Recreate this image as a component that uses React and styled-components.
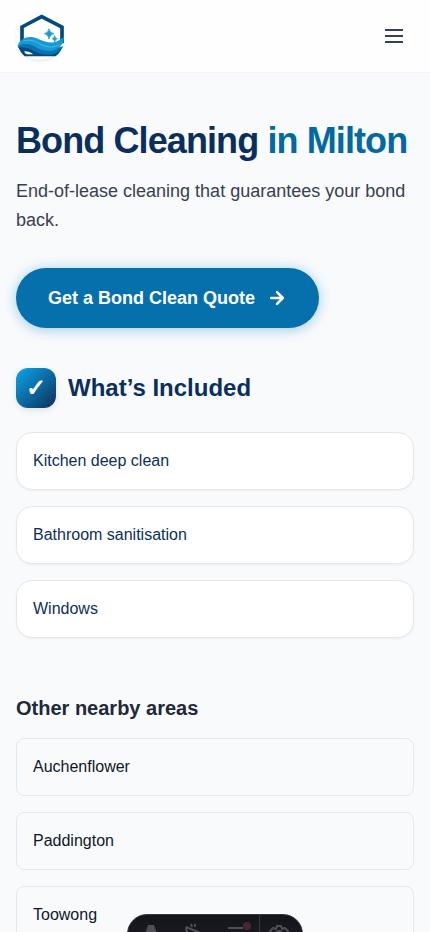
import React from "react";
import styled, { createGlobalStyle } from "styled-components";

const GlobalStyle = createGlobalStyle`
  *, *::before, *::after { box-sizing: border-box; }
  body {
    margin: 0;
    background: #f9fafc;
    color: #0f172a;
    font-family: "Liberation Sans", Arial, sans-serif;
    font-size: 16px;
    line-height: 24px;
  }
  h1, h2, p, ul { margin: 0; padding: 0; }
  ul { list-style: none; }
`;

const Header = styled.header`
  display: flex;
  align-items: center;
  justify-content: space-between;
  padding: 12px 16px;
  background: #fefefe;
  border-bottom: 1px solid #f1f5f9;
`;

const LogoLink = styled.a`
  display: block;
  width: 48px;
  height: 48px;
  border-radius: 50%;
  background: #fff;
  box-shadow: 0 1px 3px rgba(0, 0, 0, 0.1);
  svg { display: block; }
`;

const MenuButton = styled.button`
  display: flex;
  padding: 8px;
  border: 0;
  background: none;
  color: #334155;
`;

const Main = styled.main`
  padding: 48px 16px;
`;

const Title = styled.h1`
  color: #0b2f5c;
  font-size: 36px;
  line-height: 40px;
  font-weight: 700;
  letter-spacing: -0.025em;
  span { color: #0369a1; }
`;

const Lead = styled.p`
  margin-top: 16px;
  color: #374151;
  font-size: 18px;
  line-height: 29px;
`;

const QuoteLink = styled.a`
  display: inline-flex;
  align-items: center;
  gap: 12px;
  margin-top: 33px;
  padding: 16px 32px;
  border-radius: 30px;
  background: #0670ac;
  box-shadow: 0 0 14px rgba(14, 165, 233, 0.28), 0 4px 12px rgba(3, 105, 161, 0.14);
  color: #fff;
  font-size: 18px;
  line-height: 28px;
  font-weight: 700;
  text-decoration: none;
`;

const Section = styled.section`
  margin-top: ${(p) => p.$gap}px;
`;

const SectionHead = styled.div`
  display: flex;
  align-items: center;
  gap: 12px;
`;

const Tick = styled.span`
  display: flex;
  align-items: center;
  justify-content: center;
  width: 40px;
  height: 40px;
  border-radius: 12px;
  background: linear-gradient(135deg, #0ea5e9, #0b2f5c);
  box-shadow: 0 2px 6px rgba(0, 0, 0, 0.1);
  color: #fff;
  font-size: 24px;
  font-weight: 700;
`;

const Heading = styled.h2`
  color: ${(p) => (p.$large ? "#0b2f5c" : "#1f2937")};
  font-size: ${(p) => (p.$large ? 24 : 20)}px;
  line-height: ${(p) => (p.$large ? 32 : 28)}px;
  font-weight: 700;
`;

const List = styled.ul`
  display: grid;
  gap: 16px;
  margin-top: ${(p) => p.$gap}px;
`;

const Included = styled.li`
  padding: 16px;
  border: 1px solid #e5e7eb;
  border-radius: 16px;
  background: #fff;
  box-shadow: 0 1px 2px rgba(0, 0, 0, 0.05);
  color: #0b2f5c;
`;

const AreaLink = styled.a`
  display: block;
  padding: 16px;
  border: 1px solid #e2e8f0;
  border-radius: 8px;
  color: #0f172a;
  text-decoration: none;
`;

const Toolbar = styled.div`
  position: fixed;
  left: 50%;
  bottom: -22px;
  transform: translateX(-50%);
  display: flex;
  gap: 1px;
  height: 40px;
  padding-left: 2px;
  overflow: hidden;
  border: 1px solid #343841;
  border-radius: 20px;
  background: linear-gradient(180deg, #13151a, #1c1e24);
`;

const Tool = styled.button`
  display: flex;
  align-items: center;
  justify-content: center;
  width: ${(p) => (p.$divided ? 43 : 42)}px;
  padding: 0 ${(p) => (p.$divided ? 4 : 0)}px 0 0;
  border: 0;
  border-left: ${(p) => (p.$divided ? "1px solid #343841" : "0")};
  background: none;
  color: #4e5055;
`;

function Logo() {
  return (
    <svg width="48" height="48" viewBox="48 36 144 144" aria-hidden="true">
      <path d="M66 124V81L125 50L186 81V130" fill="none" stroke="#034a7e" strokeWidth="11" />
      <path d="M54 137C70 138 86 143 105 150L187 141C183 154 175 163 166 169H74C65 161 58 151 54 137Z" fill="#034a7e" />
      <path d="M73 154C82 153 91 157 100 163H82C77 162 74 159 73 154Z" fill="#fff" />
      <path d="M54 138C77 124 94 128 113 142C134 154 161 155 190 137C184 151 172 161 152 164C130 166 112 159 97 150C81 141 68 140 54 143Z" fill="#0673b0" />
      <path d="M53 136C62 116 84 105 110 115C141 129 164 136 190 112C192 129 181 145 163 151C142 157 122 150 107 141C88 130 72 130 53 138Z" fill="#149bd3" />
      <path d="M70 123C88 117 104 123 120 132C142 144 162 143 178 134" fill="none" stroke="#8fd2ee" strokeWidth="1.5" />
      <path d="M147 86Q149 99 162 101Q149 103 147 117Q145 103 133 101Q145 99 147 86ZM164 107Q165 115 172 116Q165 117 164 126Q163 117 156 116Q163 115 164 107Z" fill="#149bd3" stroke="#149bd3" strokeWidth="2" />
    </svg>
  );
}

const tools = [
  {
    label: "Menu",
    icon: <path d="M7 1h6l6 18h-5l-1-4H7l-1 4H1Z" fill="currentColor" />,
  },
  {
    label: "Inspect",
    icon: (
      <path
        d="M2 3L5 19M2 3L17 9L11 12M7 0L8 3M11 0V3M3 9L5 19"
        fill="none"
        stroke="currentColor"
        strokeWidth="2"
      />
    ),
  },
  {
    label: "Audit",
    icon: (
      <>
        <path d="M1 4H16M1 11H16M1 18H16" stroke="currentColor" strokeWidth="2" />
        <circle cx="20" cy="2" r="4" fill="#492631" />
      </>
    ),
  },
  {
    label: "Settings",
    icon: (
      <path
        d="M8 2h4l1 3 3-1 3 3-2 3 2 3-3 3-3-1-1 3H8l-1-3-3 1-3-3 2-3-2-3 3-3 3 1ZM13 10A3 3 0 1 1 7 10A3 3 0 1 1 13 10Z"
        fill="none"
        stroke="currentColor"
        strokeWidth="2"
        strokeLinejoin="round"
      />
    ),
  },
];

export default function App() {
  return (
    <>
      <GlobalStyle />
      <Header>
        <LogoLink href="#" aria-label="Home">
          <Logo />
        </LogoLink>
        <MenuButton type="button" aria-label="Open menu">
          <svg width="24" height="24" viewBox="0 0 24 24" fill="none" stroke="currentColor" strokeWidth="2">
            <path d="M3 6h18M3 12h18M3 18h18" />
          </svg>
        </MenuButton>
      </Header>
      <Main>
        <Title>
          Bond Cleaning <span>in Milton</span>
        </Title>
        <Lead>End-of-lease cleaning that guarantees your bond back.</Lead>
        <QuoteLink href="#quote">
          Get a Bond Clean Quote
          <svg
            width="20"
            height="20"
            viewBox="0 0 24 24"
            fill="none"
            stroke="currentColor"
            strokeWidth="3"
            strokeLinecap="round"
            strokeLinejoin="round"
            aria-hidden="true"
          >
            <path d="M5 12h14M12 5l7 7-7 7" />
          </svg>
        </QuoteLink>
        <Section $gap={40}>
          <SectionHead>
            <Tick aria-hidden="true">✓</Tick>
            <Heading $large>What’s Included</Heading>
          </SectionHead>
          <List $gap={24}>
            {["Kitchen deep clean", "Bathroom sanitisation", "Windows"].map((item) => (
              <Included key={item}>{item}</Included>
            ))}
          </List>
        </Section>
        <Section $gap={56}>
          <Heading>Other nearby areas</Heading>
          <List $gap={16}>
            {["Auchenflower", "Paddington", "Toowong"].map((area) => (
              <li key={area}>
                <AreaLink href={"#" + area.toLowerCase()}>{area}</AreaLink>
              </li>
            ))}
          </List>
        </Section>
      </Main>
      <Toolbar role="toolbar" aria-label="Developer tools">
        {tools.map(({ label, icon }, i) => (
          <Tool key={label} type="button" aria-label={label} $divided={i === 3}>
            <svg width="20" height="20" viewBox="0 0 20 20" overflow="visible">
              {icon}
            </svg>
          </Tool>
        ))}
      </Toolbar>
    </>
  );
}
